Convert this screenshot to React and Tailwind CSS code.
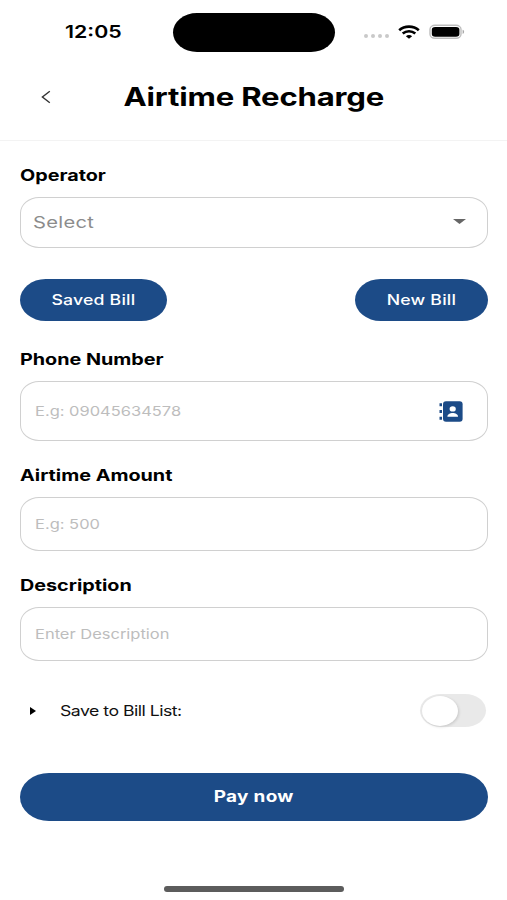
import React from "react";

// Wide-set label text, stretched horizontally from its chosen origin.
function T({ className = "", children }) {
  return (
    <span className={`inline-block whitespace-nowrap leading-none ${className}`}>
      {children}
    </span>
  );
}

function Label({ children }) {
  return (
    <div className="flex h-[22px] items-center">
      <T className="origin-left scale-x-[1.235] text-[16px] font-bold text-black">{children}</T>
    </div>
  );
}

function Field({ className = "", children }) {
  return (
    <div
      className={`mt-[11px] flex items-center justify-between rounded-[19px/16px] border-[1.5px] border-[#d0d0d0] bg-white pl-[14px] ${className}`}
    >
      {children}
    </div>
  );
}

function Placeholder({ children }) {
  return (
    <T className="mt-[1.5px] origin-left scale-x-[1.22] text-[13.5px] text-[#bdbdbd]">{children}</T>
  );
}

function StatusBar() {
  return (
    <div className="flex h-[64px] items-center">
      <div className="flex w-[173px] pl-[65px]">
        <T className="origin-left scale-x-[1.22] text-[17.5px] font-semibold">12:05</T>
      </div>
      <div className="h-[39px] w-[162px] rounded-[24px/19.5px] bg-black" />
      <div className="ml-[29px] mt-[8px] flex gap-[3px]">
        <i className="h-[4px] w-[4px] rounded-full bg-[#c9c9c9]" />
        <i className="h-[4px] w-[4px] rounded-full bg-[#c9c9c9]" />
        <i className="h-[4px] w-[4px] rounded-full bg-[#c9c9c9]" />
        <i className="h-[4px] w-[4px] rounded-full bg-[#c9c9c9]" />
      </div>
      <svg className="ml-[9px] h-[14px] w-[22px]" viewBox="0 0 22 14" fill="none" stroke="#000">
        <path d="M1.2 5.2C6.6 .5 15.4 .5 20.8 5.2" strokeWidth="2.7" />
        <path d="M4.7 8.6C8.3 5.5 13.7 5.5 17.3 8.6" strokeWidth="2.6" />
        <path d="M11 13.8L7.9 11.2C9.5 9.7 12.5 9.7 14.1 11.2Z" fill="#000" stroke="none" />
      </svg>
      <svg className="ml-[9px] h-[16px] w-[37px]" viewBox="0 0 37 16">
        <rect x="1" y="1.3" width="31" height="13" rx="5" ry="4" fill="#fff" stroke="#bdbdbd" strokeWidth="1.4" />
        <rect x="2.8" y="3" width="27.6" height="9.8" rx="3.4" ry="2.8" fill="#000" />
        <path d="M33.6 5.8C35.6 6.4 35.6 9.4 33.6 10Z" fill="#a8a8a8" />
      </svg>
    </div>
  );
}

export default function App() {
  return (
    <div className="flex h-[900px] w-[507px] flex-col overflow-hidden bg-white font-['Inter','Liberation_Sans',sans-serif] text-black">
      <StatusBar />
      <header className="flex h-[77px] items-start border-b border-[#f3f3f3] pt-[16px]">
        <div className="flex h-[34px] w-[92px] items-center pl-[41px]">
          <svg className="h-[14px] w-[10px]" viewBox="0 0 10 14" fill="none" stroke="#333" strokeWidth="1.4">
            <path d="M8.8 1.2L1.4 7L8.8 12.8" />
          </svg>
        </div>
        <h1 className="flex h-[34px] w-[323px] items-center justify-center">
          <T className="scale-x-[1.22] text-[25.5px] font-bold tracking-[-0.15px]">Airtime Recharge</T>
        </h1>
      </header>

      <main className="pl-[20px] pr-[19px] pt-[23px]">
        <Label>Operator</Label>
        <Field className="h-[50.5px] pl-[12px] pr-[21px]">
          <T className="-ml-[2px] mb-[1px] origin-left scale-x-[1.22] text-[16.5px] tracking-[0.25px] text-[#8c8c8c]">Select</T>
          <svg className="mb-[1px] h-[5px] w-[13px]" viewBox="0 0 13 5">
            <path d="M0 0H13L6.5 5Z" fill="#666" />
          </svg>
        </Field>

        <div className="mt-[31px] flex justify-between">
          <button className="flex h-[42.5px] w-[147px] items-center justify-center rounded-[26px/21.25px] bg-[#1c4b87]">
            <T className="scale-x-[1.22] text-[14.5px] font-medium tracking-[0.15px] text-white">Saved Bill</T>
          </button>
          <button className="flex h-[42.5px] w-[133px] items-center justify-center rounded-[26px/21.25px] bg-[#1c4b87]">
            <T className="scale-x-[1.22] text-[14.5px] font-medium tracking-[0.15px] text-white">New Bill</T>
          </button>
        </div>

        <div className="mt-[27px]">
          <Label>Phone Number</Label>
          <Field className="h-[60px] pr-[24px]">
            <Placeholder>E.g: 09045634578</Placeholder>
            <svg className="h-[21px] w-[24px]" viewBox="0 0 24 21">
              <rect x="4" y="0.3" width="19.6" height="20.4" rx="3" fill="#1c4b87" />
              <path d="M0.5 3.8H3M0.5 10.5H3M0.5 17.2H3" stroke="#1c4b87" strokeWidth="3" />
              <ellipse cx="13.7" cy="7.9" rx="3.1" ry="2.7" fill="#fff" />
              <path d="M8.4 15.7C8.4 10.8 19 10.8 19 15.7Z" fill="#fff" />
            </svg>
          </Field>
        </div>

        <div className="mt-[23px]">
          <Label>Airtime Amount</Label>
          <Field className="h-[54px]">
            <Placeholder>E.g: 500</Placeholder>
          </Field>
        </div>

        <div className="mt-[23px]">
          <Label>Description</Label>
          <Field className="h-[54px]">
            <Placeholder>Enter Description</Placeholder>
          </Field>
        </div>

        <div className="mt-[32.5px] flex h-[34px] items-center pr-[2px]">
          <svg className="ml-[10px] h-[8px] w-[6px]" viewBox="0 0 6 8">
            <path d="M0 0L6 4L0 8Z" fill="#000" />
          </svg>
          <T className="ml-[24px] mt-[1px] origin-left scale-x-[1.22] text-[14.5px] tracking-[-0.43px] text-[#111]">Save to Bill List:</T>
          <div className="ml-auto flex h-[33px] w-[66px] items-center rounded-[21px/16.5px] bg-[#e9e9e9] pl-[2px]">
            <div className="h-[30px] w-[36px] rounded-[50%] bg-white shadow-[1px_1px_3px_rgba(0,0,0,0.14)]" />
          </div>
        </div>

        <button className="mt-[45px] flex h-[48px] w-full items-center justify-center rounded-[29px/24px] bg-[#1c4b87]">
          <T className="scale-x-[1.22] text-[15.5px] font-bold tracking-[0.25px] text-white">Pay now</T>
        </button>
      </main>

      <div className="ml-[164px] mt-[65px] h-[6px] w-[180px] rounded-full bg-[#5c5c5c]" />
    </div>
  );
}
